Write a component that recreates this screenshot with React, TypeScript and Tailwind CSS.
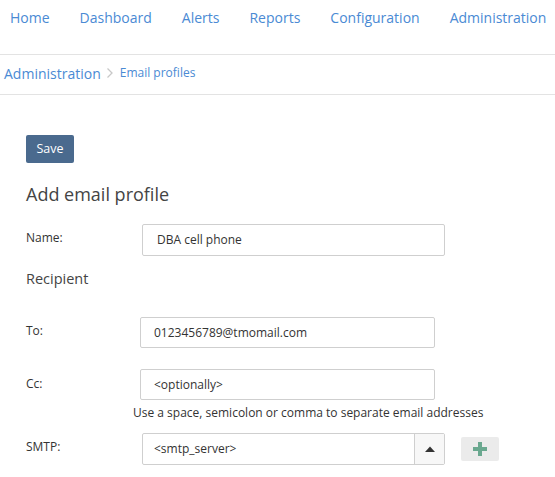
import React from "react";

const font = { fontFamily: '"Open Sans", "Noto Sans", sans-serif' };

function NavItem({ label, first }: { label: string; first?: boolean }) {
  return (
    <a className={`${first ? "pl-[10px]" : "pl-[30px]"} text-[14px] leading-[20px] text-[#4a8ad4] cursor-pointer`}>
      {label}
    </a>
  );
}

export default function App() {
  return (
    <div className="w-[555px] h-[477px] bg-white overflow-hidden text-[#333]" style={font}>
      <div className="h-[55px] border-b border-[#e3e3e3] flex items-start pt-[8px] whitespace-nowrap">
        <NavItem label="Home" first />
        <NavItem label="Dashboard" />
        <NavItem label="Alerts" />
        <NavItem label="Reports" />
        <NavItem label="Configuration" />
        <NavItem label="Administration" />
      </div>
      <div className="h-[40px] border-b border-[#e3e3e3] flex items-center pl-[4px] pb-[3px]">
        <span className="text-[14px] text-[#4a8ad4]">Administration</span>
        <svg width="8" height="12" viewBox="0 0 8 12" className="ml-[5px] mr-[6px]">
          <path d="M1.5 1.5 L6 6 L1.5 10.5" fill="none" stroke="#c8c8c8" strokeWidth="1.3" />
        </svg>
        <span className="text-[12px] text-[#4a8ad4]">Email profiles</span>
      </div>
      <div className="pl-[26px] pt-[40px]">
        <button className="w-[48px] h-[28px] bg-[#4a6a8e] text-white text-[12.5px] rounded-[2px]">Save</button>
        <div className="mt-[19px] text-[18px] leading-[24px] text-[#444]">Add email profile</div>

        <div className="mt-[18px] flex items-center">
          <div className="w-[116px] text-[12px] pb-[4px]">Name:</div>
          <div className="w-[303px] h-[32px] border border-[#cfcfcf] rounded-[2px] flex items-center pl-[14px] text-[12px]">
            DBA cell phone
          </div>
        </div>

        <div className="mt-[13px] text-[14.5px] leading-[20px] text-[#444]">Recipient</div>

        <div className="mt-[28px] flex items-center">
          <div className="w-[114px] text-[12px] pb-[4px]">To:</div>
          <div className="w-[295px] h-[31px] border border-[#cfcfcf] rounded-[2px] flex items-center pl-[13px] text-[12px]">
            0123456789@tmomail.com
          </div>
        </div>

        <div className="mt-[21px] flex items-center">
          <div className="w-[114px] text-[12px] pb-[2px]">Cc:</div>
          <div className="w-[295px] h-[31px] border border-[#cfcfcf] rounded-[2px] flex items-center pl-[13px] text-[12px]">
            &lt;optionally&gt;
          </div>
        </div>

        <div className="mt-[4px] ml-[107px] text-[12px] leading-[18px] whitespace-nowrap">
          Use a space, semicolon or comma to separate email addresses
        </div>

        <div className="mt-[11px] flex items-center">
          <div className="w-[116px] text-[12px] pb-[4px]">SMTP:</div>
          <div className="w-[303px] h-[32px] border border-[#cfcfcf] rounded-[2px] flex">
            <div className="flex-1 flex items-center pl-[11px] text-[12px]">&lt;smtp_server&gt;</div>
            <div className="w-[30px] border-l border-[#cfcfcf] bg-[#f7f7f7] flex items-center justify-center">
              <svg width="10" height="6" viewBox="0 0 10 6">
                <path d="M0 6 L5 0.5 L10 6 Z" fill="#333" />
              </svg>
            </div>
          </div>
          <div className="ml-[16px] w-[38px] h-[24px] bg-[#ebebeb] rounded-[2px] flex items-center justify-center">
            <svg width="14" height="14" viewBox="0 0 14 14">
              <rect x="5" y="0" width="4" height="14" fill="#6aa88f" />
              <rect x="0" y="5" width="14" height="4" fill="#6aa88f" />
            </svg>
          </div>
        </div>
      </div>
    </div>
  );
}
